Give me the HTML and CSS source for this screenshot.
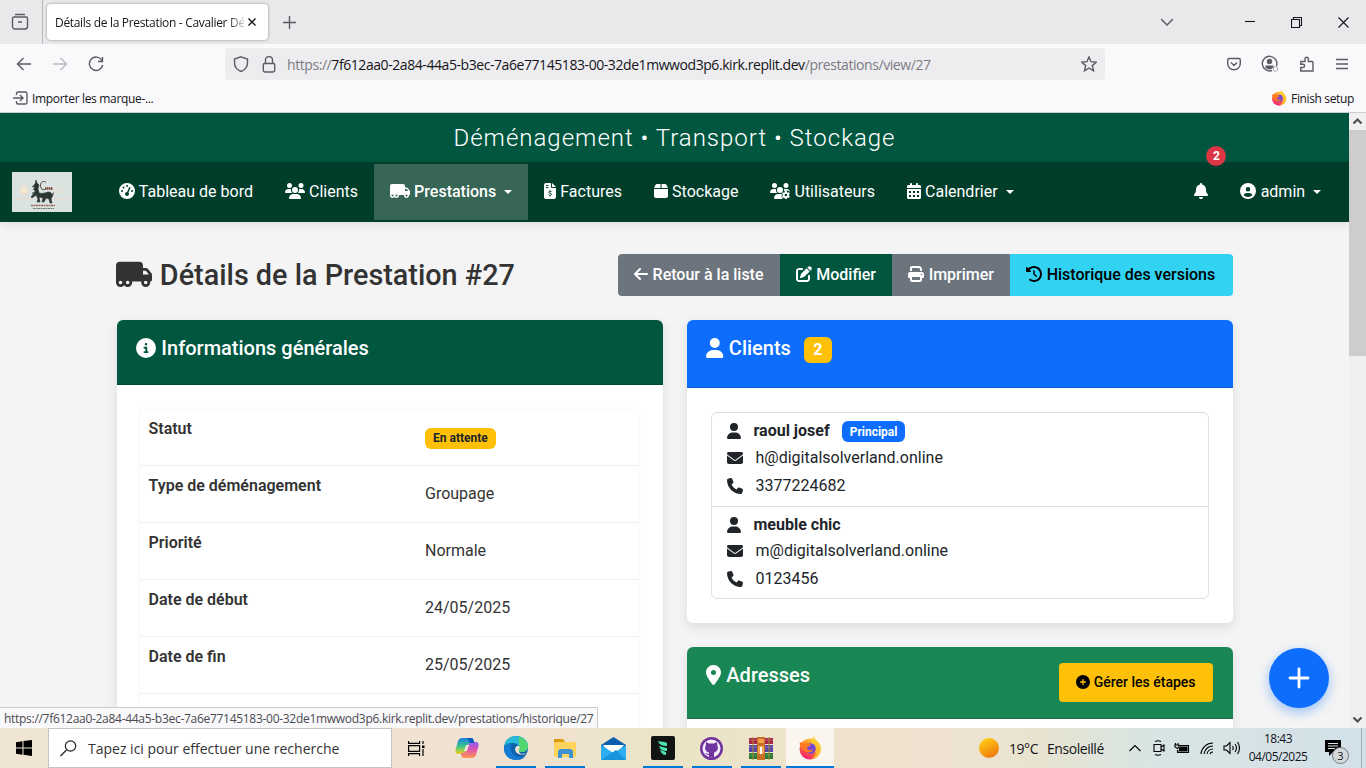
FILE: index.html
```html
<!DOCTYPE html>
<html lang="fr">
<head>
<meta charset="utf-8">
<title>Détails de la Prestation - Cavalier Déménagement</title>
<link rel="stylesheet" href="styles.css">
</head>
<body>
<svg class="defs" width="0" height="0" aria-hidden="true">
  <defs>
    <symbol id="user" viewBox="0 0 448 512"><path d="M224 256A128 128 0 1 0 224 0a128 128 0 1 0 0 256zm-45.7 48C79.8 304 0 383.8 0 482.3C0 498.7 13.3 512 29.7 512H418.3c16.4 0 29.7-13.3 29.7-29.7C448 383.8 368.2 304 269.7 304H178.3z"/></symbol>
    <symbol id="bell" viewBox="0 0 448 512"><path d="M224 0c-17.7 0-32 14.3-32 32V51.2C119 66 64 130.6 64 208v18.8c0 47-17.3 92.4-48.5 127.6l-7.4 8.3c-8.4 9.4-10.4 22.9-5.3 34.4S19.4 416 32 416H416c12.6 0 24-7.4 29.2-18.9s3.1-25-5.3-34.4l-7.4-8.3C401.3 319.2 384 273.9 384 226.8V208c0-77.4-55-142-128-156.8V32c0-17.7-14.3-32-32-32zm45.3 493.3c12-12 18.7-28.3 18.7-45.3H224 160c0 17 6.7 33.3 18.7 45.3s28.3 18.7 45.3 18.7s33.3-6.7 45.3-18.7z"/></symbol>
    <symbol id="circle-user" viewBox="0 0 512 512"><path d="M399 384.2C376.9 345.8 335.4 320 288 320H224c-47.4 0-88.9 25.8-111 64.2c35.2 39.2 86.2 63.8 143 63.8s107.8-24.7 143-63.8zM0 256a256 256 0 1 1 512 0A256 256 0 1 1 0 256zm256 16a72 72 0 1 0 0-144 72 72 0 1 0 0 144z"/></symbol>
    <symbol id="arrow-left" viewBox="0 0 448 512"><path d="M9.4 233.4c-12.5 12.5-12.5 32.8 0 45.3l160 160c12.5 12.5 32.8 12.5 45.3 0s12.5-32.8 0-45.3L109.2 288 416 288c17.7 0 32-14.3 32-32s-14.3-32-32-32l-306.7 0L214.6 118.6c12.5-12.5 12.5-32.8 0-45.3s-32.8-12.5-45.3 0l-160 160z"/></symbol>
    <symbol id="edit" viewBox="0 0 512 512"><path d="M471.6 21.7c-21.9-21.9-57.3-21.9-79.2 0L362.3 51.7l97.9 97.9 30.1-30.1c21.9-21.9 21.9-57.3 0-79.2L471.6 21.7zm-299.2 220c-6.1 6.1-10.8 13.6-13.5 21.9l-29.6 88.8c-2.9 8.6-.6 18.1 5.8 24.6s15.9 8.7 24.6 5.8l88.8-29.6c8.2-2.7 15.7-7.4 21.9-13.5L437.7 172.3 339.7 74.3 172.4 241.7zM96 64C43 64 0 107 0 160V416c0 53 43 96 96 96H352c53 0 96-43 96-96V320c0-17.7-14.3-32-32-32s-32 14.3-32 32v96c0 17.7-14.3 32-32 32H96c-17.7 0-32-14.3-32-32V160c0-17.7 14.3-32 32-32h96c17.7 0 32-14.3 32-32s-14.3-32-32-32H96z"/></symbol>
    <symbol id="print" viewBox="0 0 512 512"><path d="M128 0C92.7 0 64 28.7 64 64v96h64V64H354.7L384 93.3V160h64V93.3c0-17-6.7-33.3-18.7-45.3L400 18.7C388 6.7 371.7 0 354.7 0H128zM384 352v32 64H128V384 368 352H384zm64 32h32c17.7 0 32-14.3 32-32V256c0-35.3-28.7-64-64-64H64c-35.3 0-64 28.7-64 64v96c0 17.7 14.3 32 32 32H64v64c0 35.3 28.7 64 64 64H384c35.3 0 64-28.7 64-64V384zM432 248a24 24 0 1 1 0 48 24 24 0 1 1 0-48z"/></symbol>
    <symbol id="history" viewBox="0 0 512 512"><path d="M75 75L41 41C25.9 25.9 0 36.6 0 57.9V168c0 13.3 10.7 24 24 24H134.1c21.4 0 32.1-25.9 17-41l-30.8-30.8C155 85.5 203 64 256 64c106 0 192 86 192 192s-86 192-192 192c-40.8 0-78.6-12.7-109.7-34.4c-14.5-10.1-34.4-6.6-44.6 7.9s-6.6 34.4 7.9 44.6C151.2 495 201.7 512 256 512c141.4 0 256-114.6 256-256S397.4 0 256 0C185.3 0 121.3 28.7 75 75zm181 53c-13.3 0-24 10.7-24 24V256c0 6.4 2.5 12.5 7 17l72 72c9.4 9.4 24.6 9.4 33.9 0s9.4-24.6 0-33.9l-65-65V152c0-13.3-10.7-24-24-24z"/></symbol>
    <symbol id="info" viewBox="0 0 512 512"><path d="M256 512A256 256 0 1 0 256 0a256 256 0 1 0 0 512zM216 336h24V272H216c-13.3 0-24-10.7-24-24s10.7-24 24-24h48c13.3 0 24 10.7 24 24v88h8c13.3 0 24 10.7 24 24s-10.7 24-24 24H216c-13.3 0-24-10.7-24-24s10.7-24 24-24zm40-208a32 32 0 1 1 0 64 32 32 0 1 1 0-64z"/></symbol>
    <symbol id="envelope" viewBox="0 0 512 512"><path d="M48 64C21.5 64 0 85.5 0 112c0 15.1 7.1 29.3 19.2 38.4L236.8 313.6c11.4 8.5 27 8.5 38.4 0L492.8 150.4c12.1-9.1 19.2-23.3 19.2-38.4c0-26.5-21.5-48-48-48H48zM0 176V384c0 35.3 28.7 64 64 64H448c35.3 0 64-28.7 64-64V176L294.4 339.2c-22.8 17.1-54 17.1-76.8 0L0 176z"/></symbol>
    <symbol id="phone" viewBox="0 0 512 512"><path d="M164.9 24.6c-7.7-18.6-28-28.5-47.4-23.2l-88 24C12.1 30.2 0 46 0 64C0 311.4 200.6 512 448 512c18 0 33.8-12.1 38.6-29.5l24-88c5.3-19.4-4.6-39.7-23.2-47.4l-96-40c-16.3-6.8-35.2-2.1-46.3 11.6L304.7 368C234.3 334.7 177.3 277.7 144 207.3L193.3 167c13.7-11.2 18.4-30 11.6-46.3l-40-96z"/></symbol>
    <symbol id="pin" viewBox="0 0 384 512"><path d="M215.7 499.2C267 435 384 279.4 384 192C384 86 298 0 192 0S0 86 0 192c0 87.4 117 243 168.3 307.2c12.3 15.3 35.1 15.3 47.4 0zM192 128a64 64 0 1 1 0 128 64 64 0 1 1 0-128z"/></symbol>
    <symbol id="circle-plus" viewBox="0 0 512 512"><path d="M256 512A256 256 0 1 0 256 0a256 256 0 1 0 0 512zM232 344V280H168c-13.3 0-24-10.7-24-24s10.7-24 24-24h64V168c0-13.3 10.7-24 24-24s24 10.7 24 24v64h64c13.3 0 24 10.7 24 24s-10.7 24-24 24H280v64c0 13.3-10.7 24-24 24s-24-10.7-24-24z"/></symbol>
    <symbol id="users" viewBox="0 0 640 512"><path d="M144 0a80 80 0 1 1 0 160A80 80 0 1 1 144 0zM512 0a80 80 0 1 1 0 160A80 80 0 1 1 512 0zM0 298.7C0 239.8 47.8 192 106.7 192h42.7c15.9 0 31 3.5 44.6 9.7c-1.3 7.2-1.9 14.7-1.9 22.3c0 38.2 16.8 72.5 43.3 96H21.3C9.6 320 0 310.4 0 298.7zM405.3 320c26-23.5 42.7-57.8 42.7-96c0-7.6-.7-15-1.9-22.3c13.6-6.3 28.7-9.7 44.6-9.7h42.7C592.2 192 640 239.8 640 298.7c0 11.8-9.6 21.3-21.3 21.3H405.3zM224 224a96 96 0 1 1 192 0 96 96 0 1 1-192 0zM128 485.3C128 411.7 187.7 352 261.3 352H378.7C452.3 352 512 411.7 512 485.3c0 14.7-11.9 26.7-26.7 26.7H154.7c-14.7 0-26.7-11.9-26.7-26.7z"/></symbol>
    <symbol id="users-gear" viewBox="0 0 640 512"><path d="M144 160A80 80 0 1 0 144 0a80 80 0 1 0 0 160zm368 0A80 80 0 1 0 512 0a80 80 0 1 0 0 160zM0 298.7C0 310.4 9.6 320 21.3 320H234.7c-26.6-23.5-43.3-57.8-43.3-96c0-7.6 .7-15 1.9-22.3c-13.6-6.3-28.7-9.7-44.6-9.7H106.7C47.8 192 0 239.8 0 298.7zM320 320a96 96 0 0 0 0-192a96 96 0 1 0 0 192zm-58.7 32C187.7 352 128 411.7 128 485.3c0 14.7 11.9 26.7 26.7 26.7H410c-22-20-36-48-42-78l14-30-12-30c4-8 8-15 12-22H261.3zM440 200c16-6 32-8 50.7-8h42.7C590 192 636 236 640 290L590 250h-110l-30 20c6-20 -4-50-10-70z"/><path fill-rule="evenodd" d="M480 258h56l8 38 26 15 37-13 28 49-29 25v30l29 25-28 49-37-13-26 15-8 34h-56l-8-34-26-15-37 13-28-49 29-25v-30l-29-25 28-49 37 13 26-15zM508 347a40 40 0 1 0 0 80 40 40 0 1 0 0-80z"/></symbol>
    <symbol id="truck" viewBox="0 0 640 512"><path d="M64 32C28.7 32 0 60.7 0 96V304v80 16c0 44.2 35.8 80 80 80c26.2 0 49.4-12.6 64-32c14.6 19.4 37.8 32 64 32c44.2 0 80-35.8 80-80c0-5.5-.6-10.8-1.6-16H416h33.6c-1 5.2-1.6 10.5-1.6 16c0 44.2 35.8 80 80 80s80-35.8 80-80c0-5.5-.6-10.8-1.6-16H608c17.7 0 32-14.3 32-32V288 272 261.7c0-9.2-3.2-18.2-9-25.3l-58.8-71.8c-10.6-13-26.5-20.5-43.3-20.5H480V96c0-35.3-28.7-64-64-64H64zM585 256H480V192h48.8c2.4 0 4.7 1.1 6.2 2.9L585 256zM528 368a32 32 0 1 1 0 64 32 32 0 1 1 0-64zM176 400a32 32 0 1 1 64 0 32 32 0 1 1-64 0zM80 368a32 32 0 1 1 0 64 32 32 0 1 1 0-64z"/></symbol>
    <symbol id="box" viewBox="0 0 448 512"><path d="M50.7 58.5L0 160H208V32H93.7C75.5 32 58.9 42.3 50.7 58.5zM240 160H448L397.3 58.5C389.1 42.3 372.5 32 354.3 32H240V160zm208 32H0V416c0 35.3 28.7 64 64 64H384c35.3 0 64-28.7 64-64V192z"/></symbol>
    <symbol id="calendar" viewBox="0 0 448 512"><path fill-rule="evenodd" d="M128 0c17.7 0 32 14.3 32 32V64H288V32c0-17.7 14.3-32 32-32s32 14.3 32 32V64h48c26.5 0 48 21.5 48 48v48H0V112C0 85.5 21.5 64 48 64H96V32c0-17.7 14.3-32 32-32zM0 192H448V464c0 26.5-21.5 48-48 48H48c-26.5 0-48-21.5-48-48zM64 256v64h64v-64zM192 256v64h64v-64zM320 256v64h64v-64zM64 384v64h64v-64zM192 384v64h64v-64zM320 384v64h64v-64z"/></symbol>
    <symbol id="gauge" viewBox="0 0 512 512"><path fill-rule="evenodd" d="M0 256a256 256 0 1 1 512 0A256 256 0 1 1 0 256zM288 96a32 32 0 1 0-64 0 32 32 0 1 0 64 0zM256 416c35.3 0 64-28.7 64-64c0-17.4-6.9-33.1-18.1-44.6L366 161.7c5.3-12.1-.2-26.3-12.3-31.6s-26.3 .2-31.6 12.3L257.9 288c-36-.3-65.9 28.7-65.9 64c0 35.3 28.7 64 64 64zM176 144a32 32 0 1 0-64 0 32 32 0 1 0 64 0zM96 288a32 32 0 1 0 0-64 32 32 0 1 0 0 64zm352-32a32 32 0 1 0-64 0 32 32 0 1 0 64 0z"/></symbol>
    <symbol id="invoice" viewBox="0 0 384 512"><path fill-rule="evenodd" d="M64 0C28.7 0 0 28.7 0 64V448c0 35.3 28.7 64 64 64H320c35.3 0 64-28.7 64-64V160H256c-17.7 0-32-14.3-32-32V0zM256 0V128H384zM64 64h80v32H64zM64 128h80v32H64z"/><path class="invoice-mark" d="M240 276c-20-13-87-22-88 19c0 44 88 20 88 65c0 42-68 38-96 18M192 232v36M192 392v38"/></symbol>
    <symbol id="fox" viewBox="0 0 24 24">
      <circle cx="12" cy="13" r="10.5" fill="url(#foxg)"/>
      <path d="M13 6c0-3 2-5 3-6 1 4 6 6 7 11 1 7-4 12-10 12 5-3 6-8 3-11-1-2-4-2-3-6z" fill="#ffce2e" opacity=".75"/>
      <circle cx="12.5" cy="12.5" r="5.2" fill="#7447d8"/>
      <path d="M2 6l4 2c3-2 6-1 7 2-3 0-4 1-4 3 2 2 5 1 6 0 0 4-7 5-9 1C3 12 1 9 2 6z" fill="#ff7a20"/>
    </symbol>
    <linearGradient id="foxg" x1=".8" y1="0" x2=".3" y2="1"><stop offset="0" stop-color="#ffdc32"/><stop offset=".5" stop-color="#ff7a29"/><stop offset="1" stop-color="#f5157c"/></linearGradient>
  </defs>
</svg>

<div class="screen">
  <header class="chrome">
    <div class="tabs">
      <div class="recent"><svg width="18" height="18" viewBox="0 0 18 18"><path d="M4 1.5h10M3 4h12a1.5 1.5 0 0 1 1.5 1.5v8a2.5 2.5 0 0 1-2.5 2.5H4a2.5 2.5 0 0 1-2.5-2.5v-8A1.5 1.5 0 0 1 3 4zM7 9h4"/></svg></div>
      <div class="tab"><span class="tab-title">Détails de la Prestation - Cavalier Dé</span><svg width="10" height="10" viewBox="0 0 10 10"><path d="M1.5 1.5l7 7M8.5 1.5l-7 7"/></svg></div>
      <svg class="newtab" width="13" height="13" viewBox="0 0 13 13"><path d="M6.5 0v13M0 6.5h13"/></svg>
      <div class="window-buttons">
        <svg width="12" height="12" viewBox="0 0 12 12" class="soft"><path d="M0 3l6 6 6-6"/></svg>
        <svg width="10" height="12" viewBox="0 0 10 12"><path d="M0 5.5h10"/></svg>
        <svg width="11" height="11" viewBox="0 0 11 11"><path d="M.5 2.5h8v8h-8zM2.5 2.5v-2h8v8h-2"/></svg>
        <svg width="11" height="11" viewBox="0 0 11 11"><path d="M.5 .5l10 10M10.5 .5l-10 10"/></svg>
      </div>
    </div>
    <div class="toolbar">
      <div class="history-buttons">
        <svg width="16" height="16" viewBox="0 0 16 16"><path d="M15 8H1.5M7.5 2l-6 6 6 6"/></svg>
        <svg width="16" height="16" viewBox="0 0 16 16" class="off"><path d="M1 8h13.5M8.5 2l6 6-6 6"/></svg>
        <svg width="16" height="16" viewBox="0 0 16 16"><path d="M14 4.5A6.7 6.7 0 1 0 14.7 9M14.5 1v4.5H10"/></svg>
      </div>
      <div class="address">
        <svg width="16" height="16" viewBox="0 0 16 16"><path d="M8 .8L14.5 3v3.500c0 4.500-2.500 7.500-6.500 9-4-1.500-6.500-4.500-6.500-9V3z"/></svg>
        <svg width="14" height="17" viewBox="0 0 14 17"><path d="M2.500 7.500h9a1.200 1.200 0 0 1 1.200 1.200v5.600a1.700 1.700 0 0 1-1.700 1.700H3a1.700 1.700 0 0 1-1.700-1.700V8.700a1.200 1.200 0 0 1 1.200-1.200zM3.500 7.500V4a3.500 3.500 0 0 1 7 0v3.500"/></svg>
        <span class="url">https://<b>7f612aa0-2a84-44a5-b3ec-7a6e77145183-00-32de1mwwod3p6.kirk.replit.dev</b>/prestations/view/27</span>
        <svg class="star" width="16" height="16" viewBox="0 0 16 16"><path d="M8 1l2 4.700 5.200.5-3.900 3.400 1.200 5.200L8 12l-4.500 2.800 1.200-5.200L.8 6.200 6 5.700z"/></svg>
      </div>
      <div class="tools">
        <svg width="14" height="14" viewBox="0 0 14 14"><path d="M2 1.500h10a1.300 1.300 0 0 1 1.300 1.300V6.500a6.300 6.300 0 0 1-12.600 0V2.800A1.300 1.300 0 0 1 2 1.500zM4 5.500l3 3 3-3"/></svg>
        <svg width="18" height="18" viewBox="0 0 18 18"><path d="M11 15.500A7.300 7.300 0 1 1 15.500 11"/><circle cx="8.500" cy="6.500" r="2.700" class="solid"/><path class="solid" d="M4.500 10.500h8v1.500l-2 2-3 .5-3-1.500z"/><circle class="dot" cx="14.500" cy="14" r="2.300"/></svg>
        <svg width="15" height="16" viewBox="0 0 15 16"><path d="M2 5.500h4V3a1.700 1.700 0 0 1 3.400 0v2.500H13a1 1 0 0 1 1 1V15H1.700v-3.500H4a1.600 1.600 0 0 0 0-3.300H1.700z"/></svg>
        <svg width="12" height="12" viewBox="0 0 12 12"><path d="M0 1.500h12M0 6h12M0 10.500h12"/></svg>
      </div>
    </div>
    <div class="bookmarks">
      <svg width="15" height="14" viewBox="0 0 15 14"><path d="M3.500 4V2.500a1.500 1.500 0 0 1 1.500-1.500h7.500A1.500 1.500 0 0 1 14 2.500v9a1.500 1.500 0 0 1-1.500 1.500H5a1.500 1.500 0 0 1-1.500-1.500V10M0 7h9.500M7 4l3 3-3 3"/></svg>
      <span class="import">Importer les marque-...</span>
      <span class="finish"><svg class="firefox" width="16" height="16"><use href="#fox"/></svg><span>Finish setup</span></span>
    </div>
  </header>

  <main class="viewport">
    <div class="site">
      <div class="slogan">Déménagement • Transport • Stockage</div>
      <nav class="navbar">
        <svg class="logo" width="60" height="40" viewBox="0 0 60 40">
          <rect width="60" height="40" fill="#dae3df"/>
          <circle cx="12" cy="18" r="5" fill="none" stroke="#ecdcd2"/><circle cx="12" cy="18" r="3.400" fill="#f5ead0"/>
          <path d="M43 16v6M47 16v6M51 22v-6h3M4 27h52" stroke="#ecdcd2" stroke-width="1.200" fill="none"/>
          <path d="M23 12l1-4 1 3 2 2-1 4 1 4c3 1 6 0 9-1 3 0 5 2 4 5l-1 2 1 4h-2l-1-4-3-1-2 4h-2l1-4-4-1 1 5h-3l1-3-2-4-4 3-1-1 4-5-1-6-2 1z" fill="#2b3532" stroke="#2b3532" stroke-width=".6"/>
          <path d="M39 24c3 1 1-4 3-3M20 21l4 0M21 17l3 1" stroke="#2b3532" fill="none"/>
          <path d="M34 10c-4-2-7 2-5 6 1 2 3 2 5 1" stroke="#5b4d44" fill="none"/>
          <path d="M33 16.500h8" stroke="#7b4437" stroke-width="2.500" stroke-dasharray="1.500 .5"/>
          <path d="M19 33.500h24" stroke="#9b685c" stroke-width="1.300" stroke-dasharray="2 .5"/><path d="M21 36.500h21" stroke="#688078" stroke-dasharray="2 .5"/>
        </svg>
        <a class="nav-link first"><svg class="i w16"><use href="#gauge"/></svg> Tableau de bord</a>
        <a class="nav-link"><svg class="i w20"><use href="#users"/></svg> Clients</a>
        <a class="nav-link active"><svg class="i w20"><use href="#truck"/></svg> Prestations<span class="caret"></span></a>
        <a class="nav-link"><svg class="i w12"><use href="#invoice"/></svg> Factures</a>
        <a class="nav-link"><svg class="i w14"><use href="#box"/></svg> Stockage</a>
        <a class="nav-link"><svg class="i w20"><use href="#users-gear"/></svg> Utilisateurs</a>
        <a class="nav-link"><svg class="i w14"><use href="#calendar"/></svg> Calendrier<span class="caret"></span></a>
        <a class="nav-link notif"><svg class="i w14"><use href="#bell"/></svg><span class="count">2</span></a>
        <a class="nav-link admin"><svg class="i w16"><use href="#circle-user"/></svg> admin<span class="caret"></span></a>
      </nav>

      <div class="container">
        <div class="title-row">
          <h1><svg class="i w20"><use href="#truck"/></svg> Détails de la Prestation #27</h1>
          <div class="btn-group">
            <a class="btn gray"><svg class="i w14"><use href="#arrow-left"/></svg> Retour à la liste</a>
            <a class="btn green"><svg class="i w16"><use href="#edit"/></svg> Modifier</a>
            <a class="btn gray"><svg class="i w16"><use href="#print"/></svg> Imprimer</a>
            <a class="btn cyan"><svg class="i w16"><use href="#history"/></svg> Historique des versions</a>
          </div>
        </div>
        <div class="columns">
          <section class="card info-card">
            <h2 class="card-header dark"><span><svg class="i w16"><use href="#info"/></svg> Informations générales</span></h2>
            <div class="card-body">
              <dl class="table">
                <div class="row"><dt>Statut</dt><dd><span class="badge warning">En attente</span></dd></div>
                <div class="row"><dt>Type de déménagement</dt><dd>Groupage</dd></div>
                <div class="row"><dt>Priorité</dt><dd>Normale</dd></div>
                <div class="row"><dt>Date de début</dt><dd>24/05/2025</dd></div>
                <div class="row"><dt>Date de fin</dt><dd>25/05/2025</dd></div>
                <div class="row"><dt></dt><dd></dd></div>
              </dl>
            </div>
          </section>
          <div class="side">
            <section class="card">
              <h2 class="card-header blue"><span><svg class="i w14"><use href="#user"/></svg> Clients</span><span class="number">2</span></h2>
              <div class="card-body">
                <div class="clients">
                  <div class="client">
                    <div class="name"><svg class="i w14"><use href="#user"/></svg><strong>raoul josef</strong><span class="badge primary">Principal</span></div>
                    <div class="line"><svg class="i w16"><use href="#envelope"/></svg>h@digitalsolverland.online</div>
                    <div class="line"><svg class="i w16"><use href="#phone"/></svg>3377224682</div>
                  </div>
                  <div class="client">
                    <div class="name"><svg class="i w14"><use href="#user"/></svg><strong>meuble chic</strong></div>
                    <div class="line"><svg class="i w16"><use href="#envelope"/></svg>m@digitalsolverland.online</div>
                    <div class="line"><svg class="i w16"><use href="#phone"/></svg>0123456</div>
                  </div>
                </div>
              </div>
            </section>
            <section class="card tall">
              <h2 class="card-header success"><span><svg class="i w12"><use href="#pin"/></svg> Adresses</span><a class="steps"><svg class="i w16"><use href="#circle-plus"/></svg> Gérer les étapes</a></h2>
            </section>
          </div>
        </div>
      </div>
      <a class="fab"><svg width="22" height="22" viewBox="0 0 22 22"><path d="M11 2v18M2 11h18"/></svg></a>
      <div class="status-url">https://7f612aa0-2a84-44a5-b3ec-7a6e77145183-00-32de1mwwod3p6.kirk.replit.dev/prestations/historique/27</div>
    </div>
    <div class="scrollbar">
      <svg width="17" height="17" viewBox="0 0 17 17"><path d="M4.500 10.500l4-4 4 4"/></svg>
      <div class="thumb"></div>
      <svg width="17" height="17" viewBox="0 0 17 17"><path d="M4.500 6.500l4 4 4-4"/></svg>
    </div>
  </main>

  <footer class="taskbar">
    <div class="start"><svg width="16" height="16" viewBox="0 0 16 16"><path d="M0 2.200l6.500-.9v6.200H0zM7.500 1.100L16 0v7.500H7.500zM0 8.500h6.500v6.200L0 13.800zM7.500 8.500H16V16l-8.500-1.200z"/></svg></div>
    <div class="search"><svg width="17" height="17" viewBox="0 0 17 17"><circle cx="10.500" cy="6" r="5.200"/><path d="M6.500 10l-6 6"/></svg><span>Tapez ici pour effectuer une recherche</span></div>
    <div class="apps">
      <div class="app view"><svg width="17" height="15" viewBox="0 0 17 15" fill="none" stroke="#000" stroke-width="1.200"><path d="M.6 0v2.400h11V0M.6 15v-2.400h11V15M.6 4.600h11v5.800H.6zM15 0v3M15 8v7"/><rect x="14" y="4.500" width="2.500" height="2.500" fill="#000" stroke="none"/></svg></div>
      <div class="app"><svg width="24" height="22" viewBox="0 0 24 22"><defs><linearGradient id="cpa" x1="0" y1="0" x2="0" y2="1"><stop offset="0" stop-color="#1b7fe0"/><stop offset=".5" stop-color="#36c48b"/><stop offset="1" stop-color="#f3d020"/></linearGradient><linearGradient id="cpb" x1="0" y1="0" x2="0" y2="1"><stop offset="0" stop-color="#8b5cf0"/><stop offset=".5" stop-color="#e455ac"/><stop offset="1" stop-color="#ff9a4e"/></linearGradient></defs><path fill="url(#cpa)" d="M7 1h9c2 0 3 2 3 5h-3c-2 0-3 1-4 4l-1 4c-1 3-2 3-4 3H3c-3 0-3-2-2-6l2-7c1-2 2-3 4-3z"/><path fill="url(#cpb)" d="M17 21H9c-2 0-3-2-3-5h2c2 0 3-1 4-4l1-3c1-3 2-4 5-4h3c3 0 3 3 2 6l-2 7c-1 2-2 3-4 3z"/><path fill="#0a56c2" d="M12 1h4c2 0 3 2 3 5h-4z"/><path fill="#efe3d1" d="M11 8h3l-2 6H9z"/></svg></div>
      <div class="app open"><svg width="24" height="24" viewBox="0 0 24 24"><circle cx="12" cy="12" r="12" fill="#0f62ad"/><path d="M0 11C1 4 6 0 12 0c7 0 12 5 12 10 0 4-3 6-6 6-4 0-4-2-3-4 0-3-3-5-6-5-5 0-8 2-9 4z" fill="#29b9d9"/><path d="M15 1c5 1 9 5 9 9 0 4-3 6-6 6-4 0-4-2-3-4 1-4-1-8 0-11z" fill="#54d66e"/><path d="M0 12C1 8 5 7 8 8c-2 2-2 7 1 10 3 4 8 4 12 3-2 2-5 3-9 3C5 24 0 19 0 12z" fill="#157cd4"/><path d="M13 10c-3 2-2 5 0 7 3 2 7 2 10 0-2 1-9 2-8-3 0-1 1-2 0-4z" fill="#efe5d0"/></svg></div>
      <div class="app open"><svg width="22" height="19" viewBox="0 0 22 19"><path d="M0 0h9l2 3h10v8H0z" fill="#dc9b0b"/><path d="M0 4l2-1h20v15H0z" fill="#ffd35c"/><path d="M4 19v-7l2-2h11l2 2v7h-4v-4H8v4z" fill="#3f91d6"/></svg></div>
      <div class="app"><svg width="25" height="23" viewBox="0 0 25 23"><path d="M0 8l12.500-8L25 8v3H0z" fill="#0b5fae"/><path d="M2 8h21l-6 7H7z" fill="#fff"/><path d="M0 8l12.500 8L25 8v15H0z" fill="#2daef0"/><path d="M0 23L15 13l10 10z" fill="#1894df"/></svg></div>
      <div class="app open"><svg width="24" height="24" viewBox="0 0 24 24"><rect width="24" height="24" rx="2" fill="#101514"/><path d="M7 5c2 1 6 0 9 2v3c-4 0-8-1-9-5zM8 10c2 1 5 1 8 2v3c-4 0-7-1-8-5zM9 14c2 1 4 1 6 2v3c-3 0-5-2-6-5z" fill="#4ee0b0"/></svg></div>
      <div class="app open"><svg width="23" height="23" viewBox="0 0 23 23"><circle cx="11.500" cy="11.500" r="11.500" fill="#71349e"/><circle cx="11.500" cy="11.500" r="9" fill="#f3ecfa"/><path d="M6 5l3 1.500h5L17 5l.3 3.500c2 4-1 6.500-3.300 7V20.200a9 9 0 0 1-5 0V18c-2 0-3-1-4-2 2 0 2 1 4 1v-1.500C6.500 15 3.800 12.500 5.800 8.500z" fill="#71349e"/></svg></div>
      <div class="app open"><svg width="24" height="23" viewBox="0 0 24 23"><path d="M0 1h24v6H0z" fill="#a92646"/><path d="M0 8h24v7H0z" fill="#5547a8"/><path d="M0 16h24v6H0z" fill="#277c32"/><path d="M0 3h24M0 10h24M0 18h24" stroke="#d6b8bd" stroke-opacity=".35"/><path d="M4 0v23M20 0v23" stroke="#a68a35"/><path d="M8 0h8v23H8z" fill="#c4702a"/><path d="M9 2h6v4H9zM9 9h6v8H9z" fill="#f2a34b"/><path d="M11 10h2v7h-2z" fill="#fff"/></svg></div>
      <div class="app open current"><svg width="24" height="24"><use href="#fox"/></svg></div>
    </div>
    <div class="weather"><span class="sun"></span><span>19°C</span><span>Ensoleillé</span></div>
    <div class="tray">
      <svg width="12" height="12" viewBox="0 0 12 12"><path d="M.5 9L6 3.500 11.500 9"/></svg>
      <svg width="12" height="16" viewBox="0 0 12 16"><path d="M1 4.500h7v7H1zM8 7l3-2v6L8 9M2 1.500Q5 0 8 1.500M2 14.500Q5 16 8 14.500"/></svg>
      <svg width="16" height="12" viewBox="0 0 16 12"><path d="M5 3.500h9.500v7H3.500V8M1.500 1v2M4 1v2M.8 3h4v2L3.500 6.500 1 5z"/><path d="M6 5h7v4H5z" fill="#000"/></svg>
      <svg width="14" height="14" viewBox="0 0 14 14"><path d="M1 13A12 12 0 0 1 13 2M4 13a9 9 0 0 1 9-8M7 13a6 6 0 0 1 6-5M10 13a3 3 0 0 1 3-2"/></svg>
      <svg width="17" height="14" viewBox="0 0 17 14"><path d="M1 5h2.500L7 1.500v11L3.500 9H1zM9.500 5q1.500 2 0 4M12 3q3 4 0 8M14.500 1q4 6 0 12"/></svg>
    </div>
    <div class="clock"><span>18:43</span><span>04/05/2025</span></div>
    <div class="notices"><svg width="17" height="16" viewBox="0 0 17 16"><path d="M0 0h16v12H8l-4 4v-4H0z"/><path d="M3 3.500h10M3 6h10M3 8.500h7" stroke="#dbe5e7"/></svg><span class="badge-3">3</span></div>
    <span class="desktop-edge"></span>
  </footer>
</div>
</body>
</html>
```

FILE: styles.css
```css
* { box-sizing: border-box; }
body { margin: 0; overflow: hidden; }
.defs { position: absolute; }
.screen { width: 1366px; height: 768px; display: flex; flex-direction: column; font-family: "Open Sans", "Noto Sans", sans-serif; color: #15141a; }
svg { flex: none; }

/* Browser window */
.chrome { height: 113px; background: #f9f9fb; border-bottom: 1px solid #ccccce; }
.chrome svg { fill: none; stroke: #5b5b66; stroke-width: 1.4; }
.tabs { height: 44px; background: #e9e9eb; display: flex; align-items: center; }
.recent { width: 43px; height: 44px; border-right: 1px solid #b9b9bd; display: flex; align-items: center; padding-left: 11px; }
.tab { width: 221px; height: 36px; margin-left: 4px; background: #fff; border-radius: 4px; box-shadow: 0 0 3px rgba(0,0,0,.4); display: flex; align-items: center; padding-left: 8px; gap: 3px; }
.tab-title { width: 189px; white-space: nowrap; font-size: 12px; letter-spacing: -.32px; -webkit-mask-image: linear-gradient(90deg, #000 173px, transparent 193px); mask-image: linear-gradient(90deg, #000 173px, transparent 193px); }
.tab svg, .window-buttons svg { stroke: #15141a; }
.newtab { margin-left: 15px; }
.window-buttons { margin-left: auto; display: flex; align-items: center; padding-right: 17px; }
.window-buttons svg { stroke-width: 1.1; }
.window-buttons svg + svg { margin-left: 36px; }
.window-buttons svg.soft { stroke: #5b5b66; stroke-width: 1.5; }
.window-buttons svg.soft + svg { margin-left: 72px; }
.toolbar { height: 40px; display: flex; align-items: center; }
.history-buttons { width: 225px; display: flex; gap: 20px; padding-left: 16px; }
.off { opacity: .4; }
.address { width: 880px; height: 32px; background: #ededf0; border-radius: 4px; display: flex; align-items: center; padding: 0 8px; }
.address svg + svg { margin-left: 13px; }
.url { margin-left: 11px; font-size: 14px; letter-spacing: -.43px; color: #7c7c84; white-space: nowrap; }
.url b { font-weight: 400; color: #15141a; }
.address svg.star { margin-left: auto; }
.tools { margin-left: auto; display: flex; align-items: center; gap: 20px; padding-right: 18px; }
.tools svg:last-child { margin-left: 2px; }
.chrome .solid { fill: #5b5b66; stroke: none; }
.chrome .dot { stroke: #a5a5ad; stroke-width: 1; }
.bookmarks { height: 28px; display: flex; align-items: center; padding: 0 12px 0 13px; font-size: 12px; }
.import { margin-left: 4px; letter-spacing: -.33px; }
.finish { margin-left: auto; display: flex; align-items: center; gap: 4px; letter-spacing: -.36px; }
.chrome .firefox, .chrome .firefox * { stroke: none; }

/* Site */
.viewport { height: 615px; display: flex; }
.site { width: 1349px; height: 615px; background: #f4f4f4; overflow: hidden; position: relative; font-family: Roboto, sans-serif; font-size: 16px; line-height: 24px; color: #333; }
.i { height: 1em; vertical-align: -.125em; fill: currentColor; margin-left: -.2px; margin-right: .4px; }
.w12 { width: .75em; } .w14 { width: .875em; } .w16 { width: 1em; } .w20 { width: 1.25em; }
.slogan { height: 49px; background: #00563f; color: #fff; font-size: 24px; font-weight: 300; letter-spacing: 1px; line-height: 50px; text-align: center; }
.navbar { height: 60px; background: #003d2b; display: flex; align-items: center; padding-left: 12px; box-shadow: 0 2px 10px rgba(0,0,0,.1); color: #fff; position: relative; }
.nav-link { height: 56px; line-height: 55px; padding: 0 15.9px 0 16px; white-space: nowrap; }
.nav-link.first { margin-left: 31px; }
.nav-link.active { background: #376556; font-weight: 500; }
.caret { display: inline-block; margin-left: 8px; vertical-align: 3px; border-top: 4px solid; border-left: 4px solid transparent; border-right: 4px solid transparent; }
.notif { margin-left: auto; position: relative; }
.count { position: absolute; left: 28px; top: -18px; width: 20px; height: 20px; border-radius: 10px; background: #dc3545; font-size: 12px; font-weight: 700; line-height: 20px; text-align: center; }
.admin { margin-right: 12px; }
.invoice-mark { fill: none; stroke: #003d2b; stroke-width: 30px; }
.container { width: 1116px; margin: 32px auto 0; }
.title-row { height: 42px; display: flex; justify-content: space-between; align-items: center; }
h1 { margin: 0; font-size: 28.8px; font-weight: 500; line-height: 42px; white-space: nowrap; }
.btn-group { display: flex; border-radius: 4px; overflow: hidden; font-weight: 500; color: #fff; }
.btn { height: 42px; line-height: 41px; padding: 0 16px 0 16.5px; white-space: nowrap; }
.gray { background: #6c757d; } .green { background: #00563f; } .cyan { background: #31d2f2; color: #000; padding-right: 17.3px; }
.columns { display: grid; grid-template-columns: 546px 546px; gap: 24px; margin-top: 24px; }
.card { background: #fff; border-radius: 6px; box-shadow: 0 4px 12px rgba(0,0,0,.1); overflow: hidden; }
.info-card { height: 620px; }
.card-header { margin: 0; height: 65px; padding: 16px 20px 16px 19.7px; display: flex; font-size: 20px; line-height: 24px; font-weight: 500; color: #fff; border-bottom: 1px solid rgba(0,0,0,.18); }
.dark { background: #00563f; }
.blue { background: #0d6efd; height: 68px; }
.success { background: #198754; height: 72px; justify-content: space-between; }
.number { margin-left: 13px; margin-top: 1px; width: 28px; height: 26px; line-height: 26px; border-radius: 6px; background: #ffc107; text-align: center; font-size: 16px; font-weight: 700; }
.card-body { padding: 24px; }
.table { margin: 0 0 0 -.5px; width: 499px; border-radius: 6px; box-shadow: 0 0 4px rgba(0,0,0,.05); }
.row { height: 57px; border-bottom: 1px solid #eeeff0; display: flex; padding: 0 8.5px; }
dt { width: 276.5px; font-weight: 600; line-height: 24px; padding-top: 8px; }
dd { margin: 0; line-height: 24px; padding-top: 16px; }
.badge { display: inline-block; height: 21px; line-height: 20px; padding: 0 8px; border-radius: 6px; font-size: 12px; font-weight: 700; }
.warning { background: #ffc107; color: #212529; margin-top: 3px; }
.primary { background: #0d6efd; color: #fff; margin-left: 12px; line-height: 22px; margin-top: 2px; }
.side { display: flex; flex-direction: column; gap: 24px; }
.clients { width: 498px; border: 1px solid #dedfe0; border-radius: 6px; color: #212529; }
.client { height: 93px; padding: 4px 16px 0; }
.client + .client { border-top: 1px solid #dedfe0; height: 92px; }
.client + .client .name { height: 26px; padding-top: 1px; }
.name, .line { display: flex; align-items: center; height: 27px; }
.line { height: 28px; }
.name .i, .line .i { margin-left: -.4px; margin-right: 12.4px; }
.name strong { font-weight: 700; }
.tall { height: 200px; }
.steps { height: 39px; width: 154px; line-height: 38px; background: #ffc107; color: #000; border-radius: 4px; font-size: 14px; text-align: center; white-space: nowrap; padding-left: .6px; }
.fab { position: absolute; left: 1269px; top: 535px; width: 60px; height: 60px; border-radius: 30px; background: #0d6efd; display: flex; align-items: center; justify-content: center; box-shadow: 0 4px 12px rgba(13,110,253,.4); }
.fab path { stroke: #fff; stroke-width: 2.8; stroke-linecap: round; }
.status-url { position: absolute; left: 0; bottom: 0; width: 598px; height: 21px; background: #f9f9fb; border-top: 1px solid #ccc; border-right: 1px solid #ccc; padding-left: 4px; font: 12px/22px "Open Sans", sans-serif; color: #4a4a50; letter-spacing: -.29px; white-space: nowrap; overflow: hidden; }
.scrollbar { width: 17px; height: 615px; background: #f0f0f0; display: flex; flex-direction: column; }
.scrollbar svg { fill: none; stroke: #505050; stroke-width: 2.2; }
.thumb { height: 226px; background: #cdcdcd; margin-bottom: auto; }

/* Taskbar */
.taskbar { height: 40px; display: flex; align-items: center; background: linear-gradient(90deg, #f0e4d5 0%, #f0e2d0 38%, #ebe4c6 50%, #f0e2d0 68%, #e8e4d0 76%, #d8e5e3 84%, #d2e1e9 100%); font-size: 14px; white-space: nowrap; }
.start { width: 48px; padding-left: 16px; display: flex; }
.search { width: 344px; height: 40px; background: #fff; border: 1px solid #c4c4c4; display: flex; align-items: center; gap: 11px; padding-left: 11px; color: #333; }
.search svg { fill: none; stroke: #222; stroke-width: 1.2; }
.apps { display: flex; }
.app { width: 47px; margin-right: 2px; height: 40px; display: flex; align-items: center; justify-content: center; position: relative; }
.view { margin-left: 1px; margin-right: 3px; }
.open::after { content: ""; position: absolute; left: 4px; right: 3px; bottom: 0; height: 2px; background: #0078d7; }
.current { width: 48px; margin-right: 1px; background: #faf5ef; }
.current::after { left: 0; right: 0; }
.weather { display: flex; align-items: center; margin-left: 144px; letter-spacing: -.45px; }
.sun { width: 20px; height: 20px; border-radius: 10px; background: linear-gradient(150deg, #ffc314 20%, #ea6a0d); margin-right: 10px; }
.sun + span { margin-right: 9px; }
.tray { display: flex; align-items: center; margin-left: auto; margin-right: 9px; }
.tray svg { fill: none; stroke: #000; stroke-width: 1.1; margin-left: 12px; }
.tray svg + svg + svg { margin-left: 9.5px; }
.clock { width: 58px; display: flex; flex-direction: column; align-items: center; font-size: 12px; line-height: 18px; letter-spacing: -.5px; }
.notices { width: 24px; height: 26px; margin-left: 18px; margin-right: 12px; position: relative; display: flex; padding-top: 5px; }
.badge-3 { position: absolute; left: 7px; top: 12px; width: 17px; height: 17px; border: 1px solid #777; border-radius: 9px; background: #d4dadc; font-size: 11px; line-height: 15px; text-align: center; }
.desktop-edge { width: 5px; height: 40px; border-left: 1px solid #9daeb5; }
```
